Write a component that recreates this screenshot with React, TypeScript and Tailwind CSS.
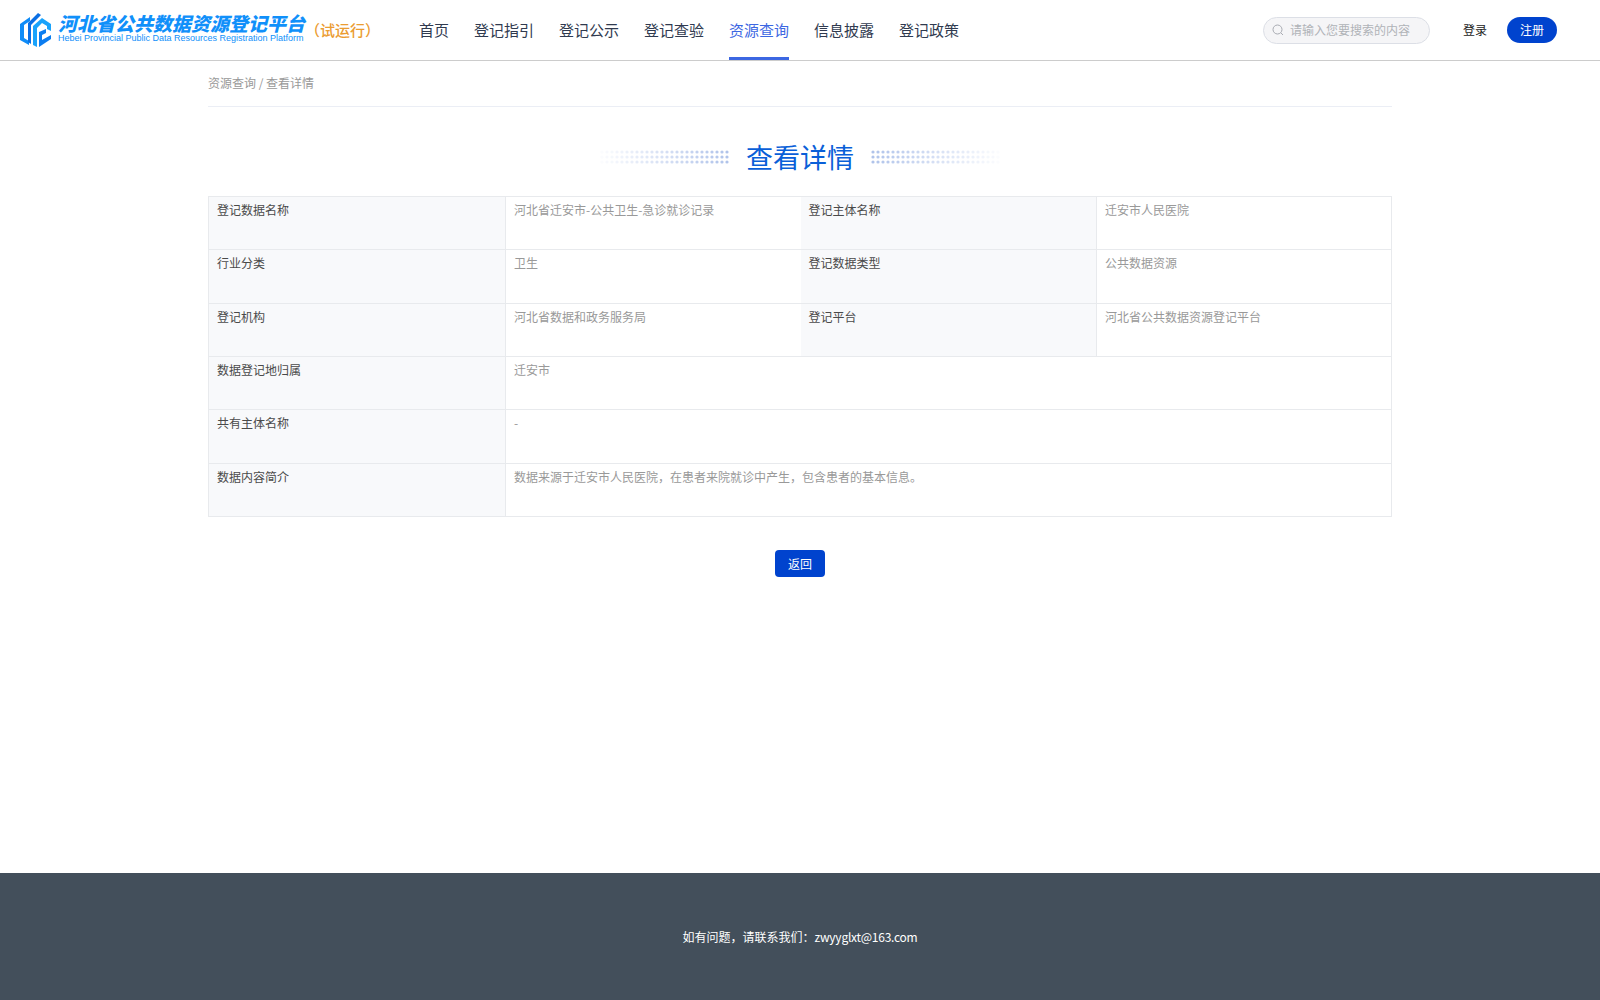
const fontStack = "font-['Noto_Sans_CJK_SC','Noto_Sans',sans-serif]";

const navItems = ["首页", "登记指引", "登记公示", "登记查验", "资源查询", "信息披露", "登记政策"];

type Cell = { label: string; value: string };

const rows: Cell[][] = [
  [
    { label: "登记数据名称", value: "河北省迁安市-公共卫生-急诊就诊记录" },
    { label: "登记主体名称", value: "迁安市人民医院" },
  ],
  [
    { label: "行业分类", value: "卫生" },
    { label: "登记数据类型", value: "公共数据资源" },
  ],
  [
    { label: "登记机构", value: "河北省数据和政务服务局" },
    { label: "登记平台", value: "河北省公共数据资源登记平台" },
  ],
  [{ label: "数据登记地归属", value: "迁安市" }],
  [{ label: "共有主体名称", value: "-" }],
  [{ label: "数据内容简介", value: "数据来源于迁安市人民医院，在患者来院就诊中产生，包含患者的基本信息。" }],
];

function Logo() {
  return (
    <svg width="32" height="36" viewBox="0 0 32 36" fill="none" className="shrink-0">
      <path d="M0 12 L10 5 V9 L4 13 V26 L9 29 V33 L0 28 Z" fill="#0f8cf8" />
      <path d="M8 11 L18 1 L21 3 L11 13 V32 L8 30 Z" fill="#0a6fe4" />
      <path d="M13 14 L22 6 L31 12 V19 L27 17 V14 L22 11 L17 16 V35 L13 33 Z" fill="#1aa3fb" />
      <path d="M19 20 L26 17 V21 L22 23 V28 L31 23 V27 L19 35 Z" fill="#0b7df0" />
    </svg>
  );
}

function DotStrip({ flip }: { flip?: boolean }) {
  const cols = Array.from({ length: 26 }, (_, i) => i);
  return (
    <svg width="130" height="15" viewBox="0 0 130 15" className={flip ? "-scale-x-100" : ""}>
      {cols.map((c) =>
        [0, 1, 2].map((r) => (
          <circle
            key={`${c}-${r}`}
            cx={2 + c * 5}
            cy={2 + r * 5}
            r={1.6}
            fill="#2f62c9"
            fillOpacity={(0.02 + (c / 25) * 0.36).toFixed(3)}
          />
        ))
      )}
    </svg>
  );
}

const labelCell = "align-top px-2 py-[3px] bg-[#f8f9fb] text-[#4a4a4a]";
const valueCell = "align-top px-2 py-[3px] text-[#999999]";

export default function App() {
  return (
    <div className={`min-h-[1000px] flex flex-col bg-white ${fontStack}`}>
      {/* Header */}
      <header className="h-[61px] flex items-center border-b border-[#cccccc] pl-5">
        <div className="flex items-center w-[399px] shrink-0">
          <Logo />
          <div className="ml-[6px] w-[247px] shrink-0 -mt-[2px]">
            <div className="text-[19px] leading-[19px] font-black italic text-[#1090fa] whitespace-nowrap">
              河北省公共数据资源登记平台
            </div>
            <div className="text-[9px] leading-[13px] text-[#1090fa] whitespace-nowrap font-['Liberation_Sans',sans-serif]">
              Hebei Provincial Public Data Resources Registration Platform
            </div>
          </div>
          <span className="text-[15px] font-medium text-[#eb9c32] whitespace-nowrap">（试运行）</span>
        </div>
        <nav className="flex gap-[25px] h-full">
          {navItems.map((item) => (
            <a
              key={item}
              className={`flex items-center text-[15px] border-b-[3px] pt-[3px] ${
                item === "资源查询" ? "text-[#3c67e2] border-[#3c67e2]" : "text-[#303a4f] border-transparent"
              }`}
            >
              {item}
            </a>
          ))}
        </nav>
        <div className="ml-auto flex items-center mr-[43px]">
          <div className="w-[167px] h-[27px] rounded-full border border-[#dcdfe6] bg-[#f5f5f7] flex items-center pl-[8px] gap-[6px]">
            <svg width="12" height="12" viewBox="0 0 12 12" fill="none" stroke="#a8abb2" strokeWidth="1">
              <circle cx="5.5" cy="5.5" r="4.5" />
              <path d="M9 9l2 2" />
            </svg>
            <span className="text-[12px] text-[#b0b3b8]">请输入您要搜索的内容</span>
          </div>
          <span className="ml-[33px] text-[12px] text-[#222222]">登录</span>
          <button className="ml-5 w-[50px] h-[26px] rounded-full bg-[#0043ce] text-white text-[12px]">注册</button>
        </div>
      </header>

      {/* Main */}
      <main className="flex-1 w-[1184px] mx-auto">
        <div className="h-[46px] pb-[2px] flex items-center border-b border-[#ebeef5] text-[12px] text-[#999999]">
          资源查询 / 查看详情
        </div>

        <div className="h-[89px] pt-[11px] flex items-center justify-center gap-4">
          <DotStrip />
          <h1 className="text-[27px] leading-[40px] text-[#0a5fd8]">查看详情</h1>
          <DotStrip flip />
        </div>

        <table className="w-[1183px] table-fixed border-collapse text-[12px] leading-[20px] [&_td]:border-[#e8eaed]">
          <colgroup>
            <col className="w-[297px]" />
            <col className="w-[295px]" />
            <col className="w-[296px]" />
            <col className="w-[295px]" />
          </colgroup>
          <tbody>
            {rows.map((row) => (
              <tr key={row[0].label} className="h-[53.33px]">
                {row.length === 2 ? (
                  <>
                    <td className={`${labelCell} border`}>{row[0].label}</td>
                    <td className={`${valueCell} border-y border-l`}>{row[0].value}</td>
                    <td className={`${labelCell} border-y border-r`}>{row[1].label}</td>
                    <td className={`${valueCell} border`}>{row[1].value}</td>
                  </>
                ) : (
                  <>
                    <td className={`${labelCell} border`}>{row[0].label}</td>
                    <td colSpan={3} className={`${valueCell} border`}>
                      {row[0].value}
                    </td>
                  </>
                )}
              </tr>
            ))}
          </tbody>
        </table>

        <div className="mt-[33px] flex justify-center">
          <button className="w-[50px] h-[27px] pt-px rounded-[4px] bg-[#0043ce] text-white text-[12px]">返回</button>
        </div>
      </main>

      {/* Footer */}
      <footer className="h-[127px] bg-[#434f5b] flex items-center justify-center text-[12px] text-white">
        如有问题，请联系我们：<span className="tracking-[-0.25px]">zwyyglxt@163.com</span>
      </footer>
    </div>
  );
}
